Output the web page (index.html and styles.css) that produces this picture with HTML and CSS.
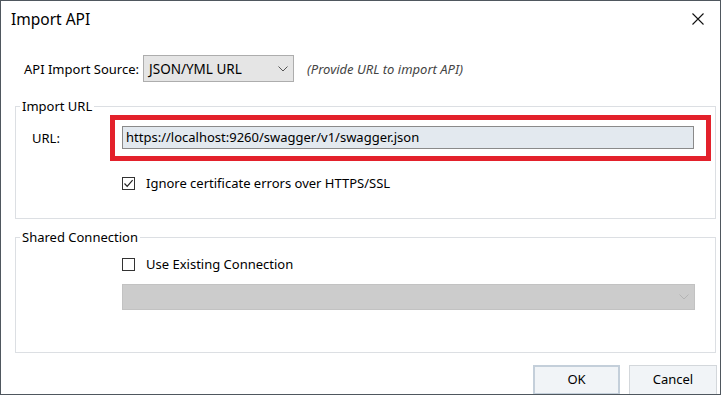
FILE: index.html
```html
<!DOCTYPE html>
<html lang="en">
<head>
<meta charset="UTF-8" />
<title>Import API</title>
<link rel="stylesheet" href="styles.css">
</head>
<body>
  <div class="window">
    <div class="titlebar">
      <span class="title">Import API</span>
      <svg class="close" width="12" height="12" viewBox="0 0 12 12">
        <path d="M0.5 0.5 L11.5 11.5 M11.5 0.5 L0.5 11.5" stroke="#111" stroke-width="1.1" fill="none"/>
      </svg>
    </div>

    <div class="source-row">
      <span class="label">API Import Source:</span>
      <div class="combo">
        <span>JSON/YML URL</span>
        <svg class="chevron" width="10" height="6" viewBox="0 0 10 6">
          <path d="M0.5 0.5 L5 5 L9.5 0.5" stroke="#555" fill="none"/>
        </svg>
      </div>
      <span class="hint">(Provide URL to import API)</span>
    </div>

    <fieldset class="group group-url">
      <legend>Import URL</legend>
      <div class="url-row">
        <span class="url-label">URL:</span>
        <div class="highlight">
          <div class="url-input">https://localhost:9260/swagger/v1/swagger.json</div>
        </div>
      </div>
      <label class="check-row">
        <span class="box checked">
          <svg width="11" height="11" viewBox="0 0 11 11">
            <path d="M1.5 5.5 L4.2 8.3 L9.6 2.2" stroke="#222" stroke-width="1.2" fill="none"/>
          </svg>
        </span>
        Ignore certificate errors over HTTPS/SSL
      </label>
    </fieldset>

    <fieldset class="group group-shared">
      <legend>Shared Connection</legend>
      <label class="check-row first">
        <span class="box"></span>
        Use Existing Connection
      </label>
      <div class="combo disabled">
        <span></span>
        <svg class="chevron" width="10" height="6" viewBox="0 0 10 6">
          <path d="M0.5 0.5 L5 5 L9.5 0.5" stroke="#b4b4b4" fill="none"/>
        </svg>
      </div>
    </fieldset>

    <div class="buttons">
      <button class="btn default">OK</button>
      <button class="btn">Cancel</button>
    </div>
  </div>
</body>
</html>
```

FILE: styles.css
```css
* {
  box-sizing: border-box;
}
body {
  margin: 0;
  font-family: "Noto Sans", "Open Sans", sans-serif;
  font-size: 13px;
  color: #000;
  background: #fff;
}
.window {
  width: 721px;
  height: 395px;
  border: 1px solid #4f575e;
  background: #fff;
  overflow: hidden;
}

/* Title bar */
.titlebar {
  height: 39px;
  display: flex;
  align-items: center;
  justify-content: space-between;
  padding: 0 16px 3px 10px;
}
.title {
  font-size: 15.5px;
}

/* Source row */
.source-row {
  display: flex;
  align-items: center;
  margin-top: 15px;
  padding-left: 23px;
}
.label {
  margin-right: 4px;
}
.combo {
  width: 151px;
  height: 27px;
  border: 1px solid #adadad;
  background: #e5e5e5;
  display: flex;
  align-items: center;
  justify-content: space-between;
  padding: 0 5px 0 5px;
  font-size: 13.5px;
}
.hint {
  font-style: italic;
  color: #444;
  margin-left: 13px;
}

/* Groups */
.group {
  margin: 0 4px 0 14px;
  padding: 0;
  border: 1px solid #dcdfe3;
}
.group legend {
  margin-left: 4px;
  padding: 0 2px;
  line-height: 16px;
  font-size: 13px;
}
.group-url {
  margin-top: 16px;
  height: 121px;
}
.group-shared {
  margin-top: 10px;
  height: 124px;
}
.url-row {
  display: flex;
  align-items: center;
  margin-top: 1px;
}
.url-label {
  width: 94px;
  padding-left: 16px;
}
.highlight {
  width: 601px;
  border: 5px solid #e3212b;
  padding: 6px 12px 7px 7px;
}
.url-input {
  height: 23px;
  border: 1px solid #8a8a8a;
  background: #e3e9ef;
  padding: 0 3px;
  line-height: 21px;
}
.check-row {
  display: flex;
  align-items: center;
  gap: 11px;
  margin: 14px 0 0 106px;
  height: 16px;
}
.check-row.first {
  margin-top: 11px;
}
.box {
  width: 13px;
  height: 13px;
  border: 1px solid #333;
  background: #fff;
  display: flex;
  align-items: center;
  justify-content: center;
}
.combo.disabled {
  width: 573px;
  height: 26px;
  margin: 12px 0 0 106px;
  background: #cccccc;
  border-color: #c2c2c2;
}

/* Buttons */
.buttons {
  display: flex;
  justify-content: flex-end;
  gap: 9px;
  margin-top: 12px;
  padding-right: 3px;
}
.btn {
  width: 88px;
  height: 30px;
  font-family: inherit;
  font-size: 13px;
  background: #f1f4f7;
  border: 1px solid #d3d7db;
  padding: 0 0 2px;
}
.btn.default {
  width: 87px;
  border: 2px solid #c4cfda;
}
```
